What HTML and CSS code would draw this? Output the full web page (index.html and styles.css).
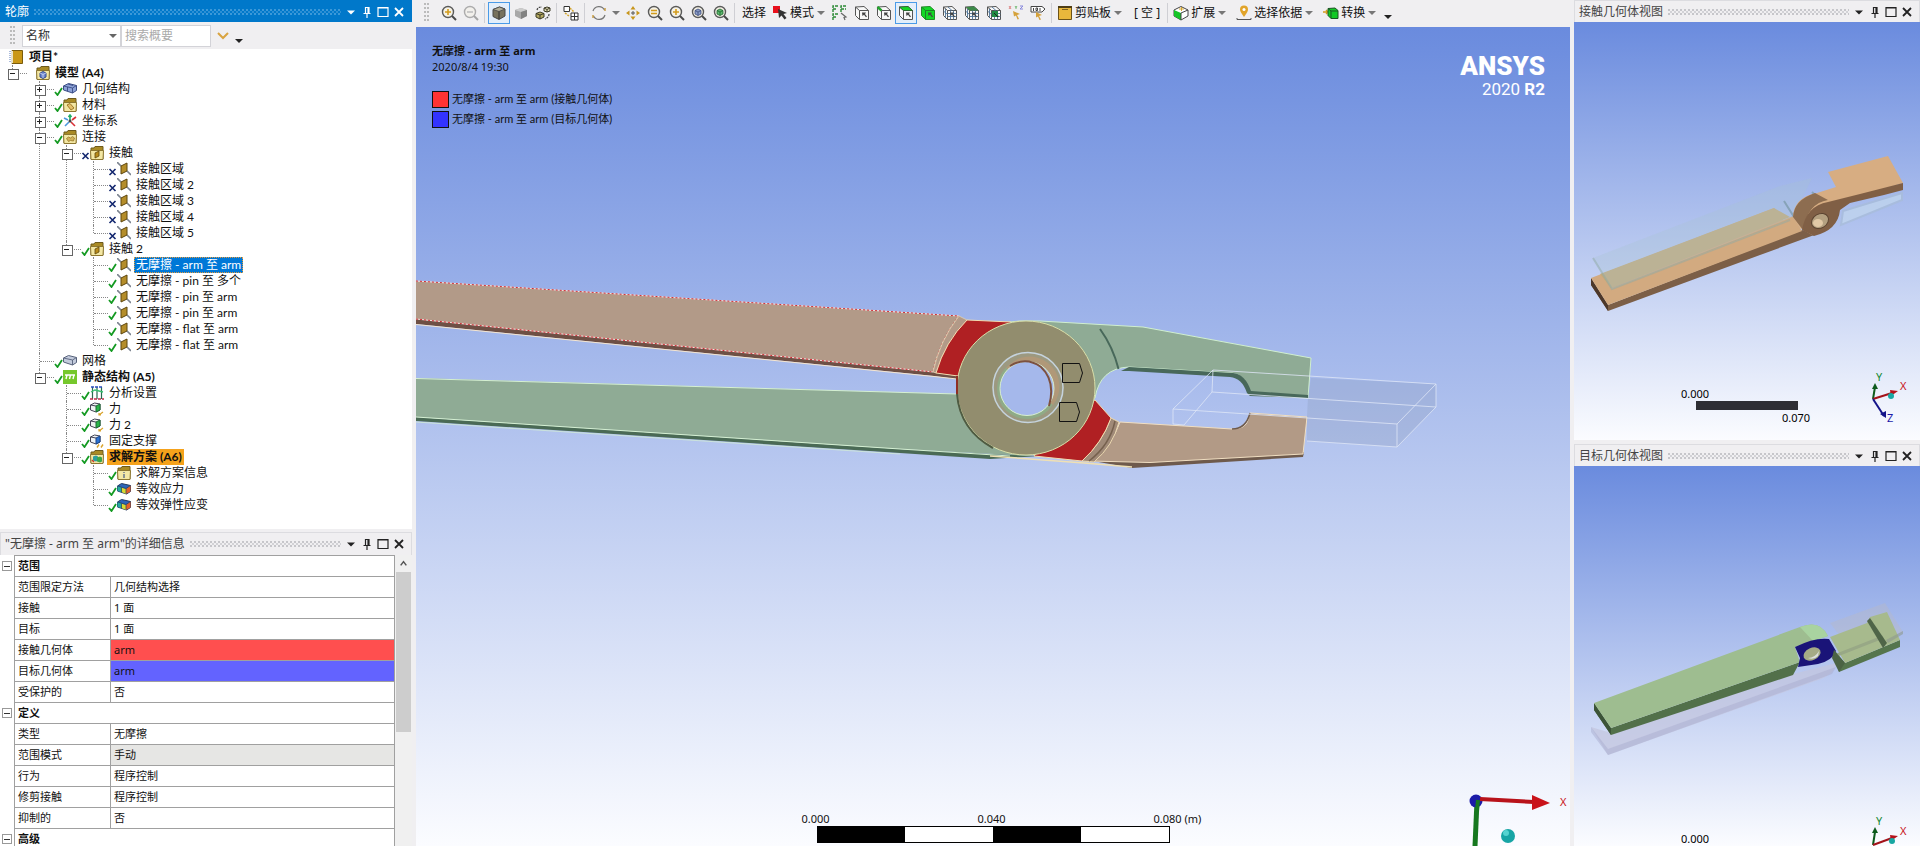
FILE: index.html
```html
<!DOCTYPE html>
<html lang="zh-CN">
<head>
    <meta charset="UTF-8">
    <meta name="viewport" content="width=device-width, initial-scale=1.0">
    <title>无摩擦 - arm 至 arm</title>
    <link rel="stylesheet" href="styles.css">
</head>
<body>

    <!-- icon sprite -->
    <svg class="sprite" aria-hidden="true">
        <symbol id="i-check" viewBox="0 0 9 9"><path d="M1 5l2.500 3L8 1" fill="none" stroke="#149a22" stroke-width="1.800"/></symbol>
        <symbol id="i-cross" viewBox="0 0 9 9"><path d="M1.500 2l6 6M7.500 2l-6 6" fill="none" stroke="#12266e" stroke-width="1.600"/></symbol>
        <symbol id="i-book" viewBox="0 0 14 14"><path d="M3 .5h10.500v13H3z" fill="#c99716" stroke="#7a5b0c"/><path d="M3 1v12" stroke="#e9e2c8" stroke-width="2"/><path d="M1 1v12" stroke="#5577b8" stroke-dasharray="1 1"/></symbol>
        <symbol id="i-folder" viewBox="0 0 14 14"><path d="M1 13V2h3l1-1.500h8V13z" fill="#a98a24" stroke="#6d5a1c"/><path d="M.5 4.500h13L13 13.500H1z" fill="#f3e7a4" stroke="#8c7630"/></symbol>
        <symbol id="i-model" viewBox="0 0 14 14"><use href="#i-folder"/><path d="M4 7l3-1.500L10 7v4l-3 1.500L4 11z" fill="#6c86cf" stroke="#354b8e"/><path d="M4 7l3 1.500L10 7M7 8.500V12" fill="none" stroke="#dfe6fa" stroke-width=".7"/></symbol>
        <symbol id="i-material" viewBox="0 0 14 14"><use href="#i-folder"/><path d="M4 7l3-1.500L11 10l-3 2z" fill="#e3c06b" stroke="#a17826"/></symbol>
        <symbol id="i-connect" viewBox="0 0 14 14"><use href="#i-folder"/><path d="M3.500 8.500l2-1.500 2 1 2-1.500 2 1.500-1 3-3-.5-2 1z" fill="#d2b25a" stroke="#987829" stroke-width=".8"/></symbol>
        <symbol id="i-cfolder" viewBox="0 0 14 14"><use href="#i-folder"/><path d="M5 7l4-2v5l-4 2z" fill="#b98c1c" stroke="#5d460d" stroke-width=".8"/></symbol>
        <symbol id="i-geom" viewBox="0 0 14 14"><path d="M0.500 4l5-2.500 8 2v5l-4 2.500-9-3z" fill="#8ea3d8" stroke="#3a4c84"/><path d="M.5 4l9 2 4-2.500M9.500 6v5M5 2l5 1.500M4.500 5v4" fill="none" stroke="#3a4c84" stroke-width=".9"/></symbol>
        <symbol id="i-mesh" viewBox="0 0 14 14"><path d="M0.500 4l5-2.500 8 2v5l-4 2.500-9-3z" fill="#c3cbdc" stroke="#56617a"/><path d="M.5 4l9 2 4-2.500M9.500 6v5" fill="none" stroke="#56617a" stroke-width=".9"/></symbol>
        <symbol id="i-coord" viewBox="0 0 14 14"><path d="M7 6V1M5.500 3L7 1l1.500 2" fill="none" stroke="#1fae68" stroke-width="1.600"/><path d="M8 8l4 4M9 6l4-3" stroke="#d93038" stroke-width="1.600"/><path d="M6 8l-4 4M5 6L1 4" stroke="#4b98dc" stroke-width="1.600"/><circle cx="7" cy="7" r="1.500" fill="#444"/></symbol>
        <symbol id="i-contact" viewBox="0 0 14 14"><path d="M0 0l4 4M10 9l4 4" stroke="#7c8490" stroke-width="1.600"/><path d="M4 4l6-3v8l-6 3z" fill="#b48d2a" stroke="#5d460d"/></symbol>
        <symbol id="i-static" viewBox="0 0 14 14"><path d="M0 0h14v14H0z" fill="#76c82c"/><path d="M2 5h10M4 5l-1 4M7.500 5l-1 4M11 5l-1 4" stroke="#fff" stroke-width="1.400"/></symbol>
        <symbol id="i-settings" viewBox="0 0 14 14"><path d="M2.500 1v12M7 1v12M11.500 1v12" stroke="#2a6b4f" stroke-width="1.200"/><path d="M1 6l4-2 4 1 4 1" fill="none" stroke="#3ac06f" stroke-width="1.300"/><path d="M1 1h12" stroke="#2a4cc0" stroke-width="1.500" stroke-dasharray="3 1"/><path d="M0 13h14" stroke="#c02a49" stroke-width="1.500" stroke-dasharray="3 1"/></symbol>
        <symbol id="i-force" viewBox="0 0 14 14"><path d="M.5 3l4-2 5.500 1v6l-4 2-5.500-2z" fill="#eef3f1" stroke="#445"/><path d="M6 4l4-2v6l-4 2z" fill="#29b548" stroke="#1b6a31"/><path d="M.5 3L6 4" stroke="#445"/><path d="M13 10l-4 3m0-2v2h2" fill="none" stroke="#d9a32c" stroke-width="1.200"/></symbol>
        <symbol id="i-fixed" viewBox="0 0 14 14"><path d="M.5 3l4-2 5.500 1v6l-4 2-5.500-2z" fill="#eef3f8" stroke="#445"/><path d="M6 4l4-2v6l-4 2z" fill="#2c72d2" stroke="#1c4484"/><path d="M.5 3L6 4" stroke="#445"/><path d="M9 10.500l-2 3M13 10.500l-2 3" stroke="#d9a32c" stroke-width="1.400"/></symbol>
        <symbol id="i-solution" viewBox="0 0 14 14"><use href="#i-folder"/><path d="M3 6.500l3-1 2 1v4l-2 1-3-1z" fill="#2e9d9f"/><path d="M7 7.500l3-1 2 1v4l-2 1-3-1z" fill="#3ba74b"/><path d="M2 10l2 2" stroke="#d03a2c" stroke-width="1.500"/></symbol>
        <symbol id="i-info" viewBox="0 0 14 14"><use href="#i-folder"/><path d="M7 6v1M7 8v4" stroke="#67758a" stroke-width="1.500"/></symbol>
        <symbol id="i-result" viewBox="0 0 14 14"><path d="M.5 4l4-2.500 9 2v6l-4 2.500-9-3z" fill="#2d64b8" stroke="#223a60"/><path d="M.5 4l4 1.500V10l-4-1z" fill="#23a8a0"/><path d="M4.500 5.500L9 7v5l-4.500-2z" fill="#d9d932"/><path d="M9 7l4.500-3.500v6L9 12z" fill="#e4602a"/><path d="M.5 4L9 6.500l4.500-3M4.500 5.500V10M9 7v5" fill="none" stroke="#27405c" stroke-width=".7"/></symbol>

        <symbol id="i-lens" viewBox="0 0 16 16"><circle cx="7" cy="7" r="5.500" fill="#f6f2e6" stroke="#5a5a5a" stroke-width="1.400"/><path d="M11 11l4 4" stroke="#4a4a4a" stroke-width="2"/></symbol>
        <symbol id="i-zoomback" viewBox="0 0 16 16"><use href="#i-lens"/><path d="M4 7h6M7 4v6" stroke="#d39c1d" stroke-width="1.600"/></symbol>
        <symbol id="i-zoomoff" viewBox="0 0 16 16"><g opacity=".45"><use href="#i-lens"/><path d="M4 7h6" stroke="#777" stroke-width="1.400"/></g></symbol>
        <symbol id="i-zoomrect" viewBox="0 0 16 16"><use href="#i-lens"/><path d="M4 5.500h6M4 8.500h6" stroke="#d39c1d" stroke-width="1.400"/></symbol>
        <symbol id="i-zoomfit" viewBox="0 0 16 16"><use href="#i-lens"/><path d="M4 5.500L7 4l3 1.500v3.500L7 10.500 4 9z" fill="#8b9cc6" stroke="#3c4d7d" stroke-width=".8"/><path d="M4 5.500L7 7l3-1.500M7 7v3.500" fill="none" stroke="#3c4d7d" stroke-width=".8"/></symbol>
        <symbol id="i-zoomsel" viewBox="0 0 16 16"><use href="#i-lens"/><path d="M4 5.500L7 4l3 1.500v3.500L7 10.500 4 9z" fill="#5cb86c" stroke="#1f6431" stroke-width=".8"/><path d="M4 5.500L7 7l3-1.500M7 7v3.500" fill="none" stroke="#1f6431" stroke-width=".8"/></symbol>
        <symbol id="i-shaded" viewBox="0 0 16 16"><path d="M2 4.500L8.500 2 14 4v7l-6 3.500-6-3z" fill="#77725d" stroke="#484848"/><path d="M2 4.500l6 2L14 4 8.500 2z" fill="#b3ad96" stroke="#484848" stroke-width=".8"/><path d="M8 6.500V14" stroke="#333"/></symbol>
        <symbol id="i-solid" viewBox="0 0 16 16"><path d="M2 5l6-2 6 2v6l-6 3-6-3z" fill="#a8a8a8"/><path d="M2 5l6 2 6-2-6-2z" fill="#ccc"/><path d="M8 7l6-2v6l-6 3z" fill="#828282"/></symbol>
        <symbol id="i-flip" viewBox="0 0 16 16"><path d="M1 8.500l4-1.500 4 1.500V12l-4 2-4-2z" fill="#b5aa62" stroke="#3c3a26"/><path d="M9 3l3-1 3 1v3l-3 1-3-1z" fill="#e4dfb8" stroke="#3c3a26"/><path d="M2 5c1-3 3-3 5-3M14 9c0 3-2 4-4 5" fill="none" stroke="#444" stroke-width="1.200" stroke-dasharray="2 1"/><path d="M1 8.500l4 1.500 4-1.500M5 10v4M9 3l3 1.500L15 3M12 4.500V7" fill="none" stroke="#3c3a26"/></symbol>
        <symbol id="i-tiles" viewBox="0 0 16 16"><path d="M1 1.500h5.500v5H1z" fill="#fff" stroke="#333"/><path d="M8 8h7v7H8zM11.500 8v7M8 11.500h7" fill="#fff" stroke="#333"/><path d="M7 3l4 4M2 8l4 3" fill="none" stroke="#d3a52e" stroke-width="1.500" stroke-dasharray="2 1"/></symbol>
        <symbol id="i-rotate" viewBox="0 0 16 16"><path d="M2 6a6.200 6.200 0 0 1 11.500-1M14 10a6.200 6.200 0 0 1-11.500 1" fill="none" stroke="#777" stroke-width="1.200"/><path d="M14 3v3M2 13v-3" fill="none" stroke="#c79a3a" stroke-width="1.400"/></symbol>
        <symbol id="i-pan" viewBox="0 0 16 16"><path d="M8 1l2.500 3.500h-5zM8 15l2.500-3.500h-5zM1 8l3.500-2.500v5zM15 8l-3.500-2.500v5z" fill="#c8961c"/><path d="M7 7h2v2H7z" fill="none" stroke="#555"/></symbol>
        <symbol id="i-mode" viewBox="0 0 16 16"><path d="M1 1h7v7H1z" fill="#e8101c"/><path d="M6 4l9 4-3.500 1 3 4-2 1.500-3-4L7 13z" fill="#333"/></symbol>
        <symbol id="i-filters" viewBox="0 0 16 16"><path d="M1 7V1h5M1 4h4M9 7V1h6M9 4h5M1 15V9h5M1 12h4" fill="none" stroke="#2c8a36" stroke-width="1.400" stroke-dasharray="3 1"/><path d="M9 8l5 4-2 .5 1 2.500" fill="none" stroke="#666" stroke-width="1.200"/></symbol>
        <symbol id="i-wire" viewBox="0 0 16 16"><path d="M1.500 2L10 1.500l4.500 4v9H5.500l-4-4z" fill="#f8f8f8" stroke="#555"/><path d="M1.500 2l4 3.500h9M5.500 5.500v9" fill="none" stroke="#555"/></symbol>
        <symbol id="i-arrowtip" viewBox="0 0 16 16"><path d="M8 7.500h4L11 9l2 2.500-1 .8-2-2.500-1.500 1.200z" fill="#444"/></symbol>
        <symbol id="i-vertex" viewBox="0 0 16 16"><use href="#i-wire"/><use href="#i-arrowtip"/></symbol>
        <symbol id="i-edge" viewBox="0 0 16 16"><use href="#i-wire"/><path d="M1.500 2l4 3.500" stroke="#22a52c" stroke-width="2.400"/><use href="#i-arrowtip"/></symbol>
        <symbol id="i-face" viewBox="0 0 16 16"><use href="#i-wire"/><path d="M1.500 2L10 1.500l4.500 4h-9z" fill="#15d423" stroke="#27582b" stroke-width=".7"/><use href="#i-arrowtip"/></symbol>
        <symbol id="i-body" viewBox="0 0 16 16"><path d="M1.500 2L10 1.500l4.500 4v9H5.500l-4-4z" fill="#12d825" stroke="#228b28"/><path d="M1.500 2l4 3.500h9M5.500 5.500v9" fill="none" stroke="#1b8026"/><use href="#i-arrowtip"/></symbol>
        <symbol id="i-node" viewBox="0 0 16 16"><use href="#i-wire"/><path d="M5.500 8.500h9M5.500 11.500h9M8.500 5.500v9M11.500 5.500v9M3.500 4v8.500M6 2l4 3.500M1.500 6l4 3.500" stroke="#4d7398" stroke-width=".9"/><use href="#i-arrowtip"/></symbol>
        <symbol id="i-elface" viewBox="0 0 16 16"><use href="#i-node"/><path d="M2 2L10 1.500l4.500 4h-9z" fill="#3c8a48"/></symbol>
        <symbol id="i-element" viewBox="0 0 16 16"><use href="#i-node"/><path d="M6 6h6v6H6z" fill="#1d8a42"/><path d="M8 8l4 4" stroke="#222"/></symbol>
        <symbol id="i-xyz" viewBox="0 0 16 16"><path d="M1 1l2 3M3 1L1 4" stroke="#d88"/><path d="M7 1l1 1.500L9 1M8 2v2" stroke="#7b7" fill="none"/><path d="M12 1h3l-3 3h3" stroke="#88d" fill="none"/><path d="M5 6l7 3-3 1 2 4-1.500.5-1.500-4-2 1z" fill="#d5a13a"/></symbol>
        <symbol id="i-tag" viewBox="0 0 16 16"><path d="M1 1.500h11l3 2.500-3 3H1z" fill="#fff" stroke="#444"/><path d="M3.500 3v3M10 3v3M6 3h1.500v2.500H6z" stroke="#444" fill="none"/><path d="M6 7l6 3-3 1 2 3.500-1.500.5L8 11.500l-2 1z" fill="#d5a13a"/></symbol>
        <symbol id="i-clip" viewBox="0 0 16 16"><path d="M1.500 1.500h13v13h-13z" fill="#e8b73c" stroke="#6d5318"/><path d="M1 2h14" stroke="#4e3d14" stroke-width="2"/><path d="M5 4.500h6" stroke="#7d611e"/></symbol>
        <symbol id="i-extend" viewBox="0 0 16 16"><path d="M1 5l7-3.500L15 5v6l-7 4-7-4z" fill="#fff" stroke="#444"/><path d="M1 5l7 3v7l-7-4z" fill="#15c527"/><path d="M8 8l7-3M8 8v7" fill="none" stroke="#444"/><path d="M6 4h5M8.500 2v4" stroke="#d3a52e"/></symbol>
        <symbol id="i-pin" viewBox="0 0 16 16"><path d="M8 12C5 8 4 6 4 4.500a4 4 0 0 1 8 0C12 6 11 8 8 12z" fill="#e1a42a"/><circle cx="8" cy="4.500" r="1.500" fill="#fff"/><path d="M1 13v1.500h14V13" fill="none" stroke="#555"/></symbol>
        <symbol id="i-convert" viewBox="0 0 16 16"><path d="M0 7h4M3 5l2 2-2 2" fill="none" stroke="#d39c1d" stroke-width="1.400"/><path d="M5 3.500L12 3l3 2.500v8H8l-3-3z" fill="#12c825" stroke="#1c5424"/><path d="M5 3.500L8 6h7M8 6v7.500" fill="none" stroke="#1c5424"/></symbol>

        <symbol id="w-menu" viewBox="0 0 12 12"><path d="M2 4.500h8L6 8.500z" fill="currentColor"/></symbol>
        <symbol id="w-pin" viewBox="0 0 12 12"><path d="M4 1.500h4.500M4.500 1v6M8 1v6M7 1v6M2.500 7.500h7M6 8v4" fill="none" stroke="currentColor" stroke-width="1.200"/></symbol>
        <symbol id="w-max" viewBox="0 0 12 12"><path d="M1 1.500h10v9H1zM1 2h10" fill="none" stroke="currentColor" stroke-width="1.200"/></symbol>
        <symbol id="w-close" viewBox="0 0 12 12"><path d="M2 2l8 8M10 2l-8 8" stroke="currentColor" stroke-width="1.800"/></symbol>
    </svg>

    <div class="app">
        <aside class="sidebar">
            <section class="panel outline">
                <header class="titlebar active">
                    <h2>轮廓</h2><span class="dots"></span>
                    <button aria-label="菜单"><svg><use href="#w-menu"/></svg></button>
                    <button aria-label="固定"><svg><use href="#w-pin"/></svg></button>
                    <button aria-label="最大化"><svg><use href="#w-max"/></svg></button>
                    <button aria-label="关闭"><svg><use href="#w-close"/></svg></button>
                </header>
                <div class="filter">
                    <span class="grip"></span>
                    <div class="pick">
                        <select aria-label="筛选方式"><option>名称</option></select>
                    </div>
                    <input type="text" placeholder="搜索概要" aria-label="搜索概要">
                    <button class="expand" aria-label="展开"><svg viewBox="0 0 12 8"><path d="M1 1l5 5 5-5" fill="none" stroke="#d9a441" stroke-width="2"/></svg></button>
                    <button class="more" aria-label="更多"></button>
                </div>
                <div class="tree">
                    <div class="project"><svg><use href="#i-book"/></svg><b>项目*</b></div>
                    <ul>
                        <li><div class="row"><i class="twig minus"></i><svg class="ico"><use href="#i-model"/></svg><b class="name">模型 (A4)</b></div>
                            <ul>
                                <li><div class="row"><i class="twig plus"></i><svg class="st"><use href="#i-check"/></svg><svg class="ico"><use href="#i-geom"/></svg><span class="name">几何结构</span></div></li>
                                <li><div class="row"><i class="twig plus"></i><svg class="st"><use href="#i-check"/></svg><svg class="ico"><use href="#i-material"/></svg><span class="name">材料</span></div></li>
                                <li><div class="row"><i class="twig plus"></i><svg class="st"><use href="#i-check"/></svg><svg class="ico"><use href="#i-coord"/></svg><span class="name">坐标系</span></div></li>
                                <li><div class="row"><i class="twig minus"></i><svg class="st"><use href="#i-check"/></svg><svg class="ico"><use href="#i-connect"/></svg><span class="name">连接</span></div>
                                    <ul>
                                        <li><div class="row"><i class="twig minus"></i><svg class="st"><use href="#i-cross"/></svg><svg class="ico"><use href="#i-cfolder"/></svg><span class="name">接触</span></div>
                                            <ul>
                                                <li><div class="row"><i class="twig"></i><svg class="st"><use href="#i-cross"/></svg><svg class="ico"><use href="#i-contact"/></svg><span class="name">接触区域</span></div></li>
                                                <li><div class="row"><i class="twig"></i><svg class="st"><use href="#i-cross"/></svg><svg class="ico"><use href="#i-contact"/></svg><span class="name">接触区域 2</span></div></li>
                                                <li><div class="row"><i class="twig"></i><svg class="st"><use href="#i-cross"/></svg><svg class="ico"><use href="#i-contact"/></svg><span class="name">接触区域 3</span></div></li>
                                                <li><div class="row"><i class="twig"></i><svg class="st"><use href="#i-cross"/></svg><svg class="ico"><use href="#i-contact"/></svg><span class="name">接触区域 4</span></div></li>
                                                <li><div class="row"><i class="twig"></i><svg class="st"><use href="#i-cross"/></svg><svg class="ico"><use href="#i-contact"/></svg><span class="name">接触区域 5</span></div></li>
                                            </ul>
                                        </li>
                                        <li><div class="row"><i class="twig minus"></i><svg class="st"><use href="#i-check"/></svg><svg class="ico"><use href="#i-cfolder"/></svg><span class="name">接触 2</span></div>
                                            <ul>
                                                <li><div class="row"><i class="twig"></i><svg class="st"><use href="#i-check"/></svg><svg class="ico"><use href="#i-contact"/></svg><span class="name selected">无摩擦 - arm 至 arm</span></div></li>
                                                <li><div class="row"><i class="twig"></i><svg class="st"><use href="#i-check"/></svg><svg class="ico"><use href="#i-contact"/></svg><span class="name">无摩擦 - pin 至 多个</span></div></li>
                                                <li><div class="row"><i class="twig"></i><svg class="st"><use href="#i-check"/></svg><svg class="ico"><use href="#i-contact"/></svg><span class="name">无摩擦 - pin 至 arm</span></div></li>
                                                <li><div class="row"><i class="twig"></i><svg class="st"><use href="#i-check"/></svg><svg class="ico"><use href="#i-contact"/></svg><span class="name">无摩擦 - pin 至 arm</span></div></li>
                                                <li><div class="row"><i class="twig"></i><svg class="st"><use href="#i-check"/></svg><svg class="ico"><use href="#i-contact"/></svg><span class="name">无摩擦 - flat 至 arm</span></div></li>
                                                <li><div class="row"><i class="twig"></i><svg class="st"><use href="#i-check"/></svg><svg class="ico"><use href="#i-contact"/></svg><span class="name">无摩擦 - flat 至 arm</span></div></li>
                                            </ul>
                                        </li>
                                    </ul>
                                </li>
                                <li><div class="row"><i class="twig"></i><svg class="st"><use href="#i-check"/></svg><svg class="ico"><use href="#i-mesh"/></svg><span class="name">网格</span></div></li>
                                <li><div class="row"><i class="twig minus"></i><svg class="st"><use href="#i-check"/></svg><svg class="ico"><use href="#i-static"/></svg><b class="name">静态结构 (A5)</b></div>
                                    <ul>
                                        <li><div class="row"><i class="twig"></i><svg class="st"><use href="#i-check"/></svg><svg class="ico"><use href="#i-settings"/></svg><span class="name">分析设置</span></div></li>
                                        <li><div class="row"><i class="twig"></i><svg class="st"><use href="#i-check"/></svg><svg class="ico"><use href="#i-force"/></svg><span class="name">力</span></div></li>
                                        <li><div class="row"><i class="twig"></i><svg class="st"><use href="#i-check"/></svg><svg class="ico"><use href="#i-force"/></svg><span class="name">力 2</span></div></li>
                                        <li><div class="row"><i class="twig"></i><svg class="st"><use href="#i-check"/></svg><svg class="ico"><use href="#i-fixed"/></svg><span class="name">固定支撑</span></div></li>
                                        <li><div class="row"><i class="twig minus"></i><svg class="st"><use href="#i-check"/></svg><svg class="ico"><use href="#i-solution"/></svg><b class="name current">求解方案 (A6)</b></div>
                                            <ul>
                                                <li><div class="row"><i class="twig"></i><svg class="st"><use href="#i-check"/></svg><svg class="ico"><use href="#i-info"/></svg><span class="name">求解方案信息</span></div></li>
                                                <li><div class="row"><i class="twig"></i><svg class="st"><use href="#i-check"/></svg><svg class="ico"><use href="#i-result"/></svg><span class="name">等效应力</span></div></li>
                                                <li><div class="row"><i class="twig"></i><svg class="st"><use href="#i-check"/></svg><svg class="ico"><use href="#i-result"/></svg><span class="name">等效弹性应变</span></div></li>
                                            </ul>
                                        </li>
                                    </ul>
                                </li>
                            </ul>
                        </li>
                    </ul>
                </div>
            </section>

            <section class="panel details">
                <header class="titlebar">
                    <h2>"无摩擦 - arm 至 arm"的详细信息</h2><span class="dots"></span>
                    <button aria-label="菜单"><svg><use href="#w-menu"/></svg></button>
                    <button aria-label="固定"><svg><use href="#w-pin"/></svg></button>
                    <button aria-label="最大化"><svg><use href="#w-max"/></svg></button>
                    <button aria-label="关闭"><svg><use href="#w-close"/></svg></button>
                </header>
                <div class="grid-wrap">
                    <table class="props">
                        <colgroup><col class="c-gutter"><col class="c-key"><col></colgroup>
                        <tr><td class="gutter"><i class="box"></i></td><th colspan="2">范围</th></tr>
                        <tr><td class="gutter"></td><td>范围限定方法</td><td>几何结构选择</td></tr>
                        <tr><td class="gutter"></td><td>接触</td><td>1 面</td></tr>
                        <tr><td class="gutter"></td><td>目标</td><td>1 面</td></tr>
                        <tr><td class="gutter"></td><td>接触几何体</td><td class="red">arm</td></tr>
                        <tr><td class="gutter"></td><td>目标几何体</td><td class="blue">arm</td></tr>
                        <tr><td class="gutter"></td><td>受保护的</td><td>否</td></tr>
                        <tr><td class="gutter"><i class="box"></i></td><th colspan="2">定义</th></tr>
                        <tr><td class="gutter"></td><td>类型</td><td>无摩擦</td></tr>
                        <tr><td class="gutter"></td><td>范围模式</td><td class="readonly">手动</td></tr>
                        <tr><td class="gutter"></td><td>行为</td><td>程序控制</td></tr>
                        <tr><td class="gutter"></td><td>修剪接触</td><td>程序控制</td></tr>
                        <tr><td class="gutter"></td><td>抑制的</td><td>否</td></tr>
                        <tr><td class="gutter"><i class="box"></i></td><th colspan="2">高级</th></tr>
                    </table>
                    <div class="scrollbar">
                        <svg viewBox="0 0 16 16"><path d="M5 10l3-4 3 4" fill="none" stroke="#555" stroke-width="1.600"/></svg>
                        <span class="thumb"></span>
                    </div>
                </div>
            </section>
        </aside>

        <main class="center">
            <nav class="toolbar">
                <span class="grip"></span>
                <button class="tb" aria-label="上一视图"><svg><use href="#i-zoomback"/></svg></button>
                <button class="tb" aria-label="下一视图"><svg><use href="#i-zoomoff"/></svg></button>
                <span class="sep"></span>
                <button class="tb on" aria-label="着色和边"><svg><use href="#i-shaded"/></svg></button>
                <button class="tb" aria-label="着色"><svg><use href="#i-solid"/></svg></button>
                <button class="tb" aria-label="翻转"><svg><use href="#i-flip"/></svg></button>
                <span class="sep"></span>
                <button class="tb" aria-label="视口"><svg><use href="#i-tiles"/></svg></button>
                <span class="sep"></span>
                <button class="tb" aria-label="旋转"><svg><use href="#i-rotate"/></svg></button>
                <i class="caret"></i>
                <button class="tb" aria-label="平移"><svg><use href="#i-pan"/></svg></button>
                <button class="tb" aria-label="缩放"><svg><use href="#i-zoomrect"/></svg></button>
                <button class="tb" aria-label="框缩放"><svg><use href="#i-zoomback"/></svg></button>
                <button class="tb" aria-label="缩放至全部"><svg><use href="#i-zoomfit"/></svg></button>
                <button class="tb" aria-label="缩放至选择"><svg><use href="#i-zoomsel"/></svg></button>
                <span class="sep"></span>
                <span class="label">选择</span>
                <button class="txt"><svg><use href="#i-mode"/></svg>模式<i class="caret"></i></button>
                <button class="tb" aria-label="过滤器"><svg><use href="#i-filters"/></svg></button>
                <button class="tb" aria-label="顶点"><svg><use href="#i-vertex"/></svg></button>
                <button class="tb" aria-label="边"><svg><use href="#i-edge"/></svg></button>
                <button class="tb on" aria-label="面"><svg><use href="#i-face"/></svg></button>
                <button class="tb" aria-label="体"><svg><use href="#i-body"/></svg></button>
                <button class="tb" aria-label="节点"><svg><use href="#i-node"/></svg></button>
                <button class="tb" aria-label="单元面"><svg><use href="#i-elface"/></svg></button>
                <button class="tb" aria-label="单元"><svg><use href="#i-element"/></svg></button>
                <button class="tb" aria-label="坐标"><svg><use href="#i-xyz"/></svg></button>
                <button class="tb" aria-label="标签"><svg><use href="#i-tag"/></svg></button>
                <span class="sep"></span>
                <button class="txt"><svg><use href="#i-clip"/></svg>剪贴板<i class="caret"></i></button>
                <span class="label">[ 空 ]</span>
                <span class="sep"></span>
                <button class="txt"><svg><use href="#i-extend"/></svg>扩展<i class="caret"></i></button>
                <button class="txt"><svg><use href="#i-pin"/></svg>选择依据<i class="caret"></i></button>
                <button class="txt"><svg><use href="#i-convert"/></svg>转换<i class="caret"></i></button>
                <button class="more" aria-label="更多"></button>
            </nav>

            <div class="view">
                <svg class="scene" viewBox="416 27 1154 819">
                    <!-- lower handle -->
                    <path d="M416 417L900 449 990 454 1040 456 990 459 900 453 416 421z" fill="#4a6a55"/>
                    <path d="M416 378L957 394 1030 420 1030 456 900 449 416 417z" fill="#8fab95"/>
                    <path d="M416 378.500L957 394M416 417L900 449 1010 456" fill="none" stroke="#d5f0d2"/>
                    <path d="M416 422L900 454" fill="none" stroke="#d5f0d2" stroke-width=".7"/>
                    <!-- upper handle -->
                    <path d="M416 319L933 372 957 376 956 379 934 376 416 324z" fill="#6e5045"/>
                    <path d="M416 281L959 316 Q940 340 933 372L416 319z" fill="#b29a88"/>
                    <path d="M416 324.500L934 376.500 957 379" fill="none" stroke="#f5e5cf"/>
                    <path d="M416 281L959 316Q940 340 933 372L416 319" fill="none" stroke="#f4e4dc"/>
                    <path d="M416 281L959 316Q940 340 933 372L416 319" fill="none" stroke="#d12c35" stroke-dasharray="2 2"/>
                    <path d="M959 316l8 4Q945 342 936 373l-3-1Q940 340 959 316z" fill="#b29a88" stroke="#ead7b0" stroke-width=".7"/>
                    <!-- upper jaw -->
                    <path d="M1000 323Q1020 320 1040 321L1143 327 1311 358 1308 398 1250 395Q1246 374 1232 373L1129 367Q1100 368 1095 398L1050 400z" fill="#8fab95" stroke="#d0efcf"/>
                    <path d="M1129 367L1233 373Q1245 374 1251 391L1308 395 1308 398 1250 396 1247 393Q1242 378 1230 377L1129 371 1121 371z" fill="#48685a"/>
                    <path d="M1100 329Q1113 347 1118.500 369" fill="none" stroke="#48685a" stroke-width="2"/>
                    <!-- lower jaw -->
                    <path d="M1082 459L1132 468 1303 457 1304 452 1132 462 1100 455z" fill="#6e5a4c"/>
                    <path d="M1120 422L1232 429Q1246 429 1248 420L1250 413 1307 417 1303 454 1150 462.500 1090 461Q1112 446 1120 422z" fill="#b29a86" stroke="#f1dfc2"/>
                    <path d="M1232 429Q1246 429 1250 413" fill="none" stroke="#6e5a4c" stroke-width="1.500"/>
                    <path d="M1111 418l8 4q-6 24-25 40l-12-1q20-18 29-43z" fill="#a08a78" stroke="#ead7b0"/>
                    <path d="M1115 421q-5 24-26 40" fill="none" stroke="#76614e" stroke-width="1.500"/>
                    <path d="M990 456L1084 463 1132 467" fill="none" stroke="#efe0b4" stroke-width="1.500"/>
                    <!-- contact faces -->
                    <path d="M967 320L1011 322 1000 350 958 376 936 373Q945 342 967 320z" fill="#b02023" stroke="#f3ddb0"/>
                    <path d="M1095 400L1111 418Q1102 443 1082 461L1034 456 1060 420z" fill="#b02023" stroke="#f3ddb0"/>
                    <!-- pivot -->
                    <ellipse cx="1026" cy="388" rx="69" ry="67" fill="#928d6e" stroke="#d9dfa9"/>
                    <path d="M957 376v18" stroke="#8f2f24" stroke-width="2"/>
                    <path d="M957 394Q960 430 993 448" fill="none" stroke="#4f5b42" stroke-width="2"/>
                    <circle cx="1028" cy="387.500" r="35" fill="#9c9980" stroke="#c5d3dd" stroke-width="1.500"/>
                    <circle cx="1027" cy="389" r="30" fill="#8fab87"/>
                    <path d="M1006 368A29 29 0 0 1 1053 405L1040 395z" fill="#b09878"/>
                    <circle cx="1027" cy="388.500" r="27" fill="#a5b8eb" stroke="#d8efd0"/>
                    <path d="M1010 366Q1026 356 1041 367 1056 381 1049 406" fill="none" stroke="#7c5140" stroke-width="2"/>
                    <path d="M1062.500 363.500h17l3 9.500-3 9.500h-17zM1059.500 402.500h17l3 9.500-3 9.500h-17z" fill="none" stroke="#111"/>
                    <!-- hidden plate -->
                    <path d="M1311 378L1436 384 1436 407 1397 447 1307 441V417L1308 398z" fill="#8492b5" opacity=".25"/>
                    <path d="M1213 370L1436 384V407L1397 447 1307 441M1213 370L1173 409V424M1213 370L1212 392 1436 407M1173 409L1397 424 1436 384M1397 424V447M1173 424 L1184 425L1212 392" fill="none" stroke="#dfe6f6" opacity=".8"/>
                    <!-- triad -->
                    <path d="M1477 801L1475 846" stroke="#16781f" stroke-width="5"/>
                    <circle cx="1476" cy="801" r="6.500" fill="#1b1ba8"/>
                    <path d="M1480 799L1534 802" stroke="#b8121a" stroke-width="4"/>
                    <path d="M1532 795L1550 803 1532 810z" fill="#c9121a"/>
                    <path d="M1478 800l-1 10" stroke="#16781f" stroke-width="4"/>
                    <circle cx="1508" cy="836" r="7" fill="#17a5a5"/><circle cx="1506" cy="833" r="3" fill="#55d3d0"/>
                    <text x="1560" y="806" class="axis red-axis">X</text>
                </svg>
                <div class="caption">
                    <div class="notes">
                        <h1>无摩擦 - arm 至 arm</h1>
                        <p>2020/8/4 19:30</p>
                        <ul class="legend">
                            <li><i class="swatch s-red"></i>无摩擦 - arm 至 arm (接触几何体)</li>
                            <li><i class="swatch s-blue"></i>无摩擦 - arm 至 arm (目标几何体)</li>
                        </ul>
                    </div>
                    <div class="brand"><strong>ANSYS</strong><span>2020 <b>R2</b></span></div>
                </div>
                <div class="ruler">
                    <div class="marks"><span>0.000</span><span>0.040</span><span>0.080 (m)</span></div>
                    <div class="bar"><i></i><i></i><i></i><i></i></div>
                </div>
            </div>
        </main>

        <aside class="previews">
            <section class="panel contact-view">
                <header class="titlebar">
                    <h2>接触几何体视图</h2><span class="dots"></span>
                    <button aria-label="菜单"><svg><use href="#w-menu"/></svg></button>
                    <button aria-label="固定"><svg><use href="#w-pin"/></svg></button>
                    <button aria-label="最大化"><svg><use href="#w-max"/></svg></button>
                    <button aria-label="关闭"><svg><use href="#w-close"/></svg></button>
                </header>
                <div class="view">
                    <svg class="scene" viewBox="1574 22 346 418">
                        <path d="M1591 278L1608 305 1802 230 1817 234 1608 311 1591 285z" fill="#7c5f47"/>
                        <path d="M1591 278L1608 305V311L1591 285z" fill="#4c382b"/>
                        <path d="M1591 278L1774 208 1783 220 1793 216 1802 231 1608 305z" fill="#d2aa80"/>
                        <path d="M1611 288L1790 217 1774 208 1600 274z" fill="#c3ab7c"/>
                        <path d="M1593 258L1780 186 1812 178 1793 217 1612 289z" fill="#a9c4d0" opacity=".3"/>
                        <path d="M1593 258l19 31L1790 220" fill="none" stroke="#8fa9a4" stroke-width="2" opacity=".5"/>
                        <path d="M1784 201l10 16M1812 192l8 8" stroke="#87a3b8" stroke-width="2"/>
                        <path d="M1843 211L1902 193 1902 200 1841 225z" fill="#c3d8ee" stroke="#a8bdd8" stroke-width="2" opacity=".7"/>
                        <path d="M1793 217Q1794 197 1817 193L1836 187 1828 172 1888 156 1903 183 1860 196 1840 208 1828 230 1812 235 1800 228z" fill="#d7ad82"/>
                        <path d="M1793 217Q1794 200 1815 193L1828 200Q1808 203 1803 230z" fill="#8d6d50"/>
                        <path d="M1802 230Q1806 206 1828 202L1860 194 1903 183V190L1884 195 1850 203 1840 210Q1838 230 1814 236z" fill="#805f45"/>
                        <ellipse cx="1820" cy="221" rx="9" ry="7" transform="rotate(-30 1820 221)" fill="#b4a080" stroke="#5c4431" stroke-width="1"/>
                        <ellipse cx="1818" cy="223" rx="5" ry="4" fill="#e2c9a6"/>
                        <path d="M1696 401h102v9h-102z" fill="#2e2e34"/>
                        <g class="ticks"><text x="1695" y="398">0.000</text><text x="1796" y="422">0.070</text></g>
                        <path d="M1873 399L1875 387" stroke="#0c5a1c" stroke-width="2"/><path d="M1872 389l3-6 3 6z" fill="#0c5a1c"/>
                        <path d="M1873 399L1892 393" stroke="#a3121a" stroke-width="2"/><path d="M1890 390l8 1-7 5z" fill="#b5121a"/>
                        <path d="M1873 399L1884 416" stroke="#14148a" stroke-width="2"/><path d="M1880 414l6-3v7z" fill="#14148a"/>
                        <circle cx="1891" cy="396" r="3" fill="#18a7a2"/>
                        <text x="1876" y="381" class="axis green-axis">Y</text><text x="1900" y="390" class="axis red-axis">X</text><text x="1887" y="422" class="axis blue-axis">Z</text>
                    </svg>
                </div>
            </section>
            <section class="panel target-view">
                <header class="titlebar">
                    <h2>目标几何体视图</h2><span class="dots"></span>
                    <button aria-label="菜单"><svg><use href="#w-menu"/></svg></button>
                    <button aria-label="固定"><svg><use href="#w-pin"/></svg></button>
                    <button aria-label="最大化"><svg><use href="#w-max"/></svg></button>
                    <button aria-label="关闭"><svg><use href="#w-close"/></svg></button>
                </header>
                <div class="view">
                    <svg class="scene" viewBox="1574 466 346 380">
                        <path d="M1591 727L1611 733 1793 674 1836 663Q1835 675 1815 681L1608 755z" fill="#c3c6df" opacity=".75"/>
                        <path d="M1591 727L1608 749 1836 667 1832 674 1608 755 1591 732z" fill="#a9add0" opacity=".5"/>
                        <path d="M1594 703L1611 728 1800 662 1793 675 1611 735 1594 710z" fill="#52704a"/>
                        <path d="M1594 703l17 25v7l-17-25z" fill="#3c5438"/>
                        <path d="M1594 703L1800 627Q1820 619 1828 636L1795 647 1800 662 1611 728z" fill="#9ebd90"/>
                        <path d="M1800 627Q1820 619 1828 636L1813 641z" fill="#a9d3a0"/>
                        <path d="M1795 647Q1815 637 1829 639L1836 651Q1832 661 1818 664L1798 667 1800 658z" fill="#1a1478"/>
                        <ellipse cx="1812" cy="654" rx="9" ry="6" transform="rotate(-25 1812 654)" fill="#a5ab86"/>
                        <path d="M1808 658q7 0 11-7l-1 5q-4 4-10 2z" fill="#dce0dc"/>
                        <path d="M1830 623L1885 603 1903 632 1885 640 1840 636z" fill="#b9b9c4" opacity=".4"/>
                        <path d="M1834 650L1845 663 1900 640V647L1839 672z" fill="#55754d"/>
                        <path d="M1830 637L1867 623 1870 617 1887 612 1900 640 1845 663z" fill="#a7ba8d"/>
                        <path d="M1837 655L1883 637" stroke="#98a886" stroke-width="3"/>
                        <path d="M1834 650l11 13-6 9-7-14z" fill="#4b6344"/>
                        <path d="M1867 621L1870 618 1887 643 1883 648z" fill="#4f6548"/>
                        <path d="M1886 640L1903 631V634L1888 643z" fill="#8e9a90" opacity=".6"/>
                        <g class="ticks"><text x="1695" y="843">0.000</text></g>
                        <path d="M1873 845L1875 832" stroke="#0c5a1c" stroke-width="2"/><path d="M1872 833l3-6 3 6z" fill="#0c5a1c"/>
                        <path d="M1873 845L1892 838" stroke="#a3121a" stroke-width="2"/><path d="M1890 835l8 1-7 5z" fill="#b5121a"/>
                        <circle cx="1892" cy="841" r="3" fill="#18a7a2"/>
                        <text x="1876" y="825" class="axis green-axis">Y</text><text x="1900" y="835" class="axis red-axis">X</text>
                    </svg>
                </div>
            </section>
        </aside>
    </div>

</body>
</html>
```
FILE: styles.css
```css
* { margin: 0; padding: 0; box-sizing: border-box; }
body { background: #f0eff1; color: #111; font-family: "Noto Sans", "Noto Sans CJK SC", sans-serif; font-size: 12px; line-height: 16px; overflow: hidden; }
button { background: none; border: none; font: inherit; color: inherit; }
ul { list-style: none; }
.sprite { display: none; }

.app { display: flex; height: 100vh; }
.sidebar { width: 412px; margin-right: 4px; display: flex; flex-direction: column; gap: 3px; flex-shrink: 0; }
.center { flex: 1; min-width: 0; display: flex; flex-direction: column; }
.previews { width: 346px; margin-left: 4px; display: flex; flex-direction: column; gap: 4px; flex-shrink: 0; }
.panel { display: flex; flex-direction: column; min-height: 0; }

/* title bars */
.titlebar { display: flex; align-items: center; height: 22px; flex-shrink: 0; padding: 0 4px; border: 1px solid #dcdce0; border-bottom: none; color: #222; }
.titlebar h2 { font-size: 12px; font-weight: normal; color: #444; white-space: nowrap; }
.titlebar.active { background: #0078ca; border-color: #0078ca; color: #fff; }
.titlebar.active h2 { color: #fff; }
.titlebar button { width: 16px; height: 16px; display: flex; align-items: center; justify-content: center; }
.titlebar svg { width: 12px; height: 12px; }
.dots { flex: 1; height: 6px; margin: 0 2px 0 5px; background: linear-gradient(#c4c4c8, #c4c4c8) 0 0 / 1px 1px; background: conic-gradient(#bbbbc0 25%, transparent 0) 0 0 / 4px 4px; background: radial-gradient(circle at 1px 1px, #c6c6ca 1px, transparent 1px) 0 0 / 4px 4px, radial-gradient(circle at 1px 1px, #d2d2d6 1px, transparent 1px) 2px 2px / 4px 4px; }
.active .dots { background: radial-gradient(circle at 1px 1px, #3c99d9 1px, transparent 1px) 0 0 / 4px 4px, radial-gradient(circle at 1px 1px, #2c8fd4 1px, transparent 1px) 2px 2px / 4px 4px; }

/* outline */
.filter { display: flex; align-items: center; height: 27px; padding: 2px 0 2px 10px; flex-shrink: 0; }
.grip { width: 6px; height: 20px; background: radial-gradient(circle at 1px 1px, #bbb 1px, transparent 1px) 0 0 / 3px 4px; }
.filter .grip { margin-right: 6px; }
.pick { position: relative; }
.pick::after { content: ""; position: absolute; right: 4px; top: 9px; border: 4px solid transparent; border-top-color: #666; border-bottom: none; }
.pick select { width: 99px; appearance: none; }
.filter select, .filter input { height: 22px; border: 1px solid #d3d3d8; background: #fff; font: inherit; padding: 0 3px; color: #333; display: block; }
.filter input { width: 90px; }
.filter input::placeholder { color: #aaa; }
.expand { width: 12px; height: 8px; margin-left: 6px; display: flex; }
.more { width: 8px; height: 4px; margin: 10px 0 0 6px; border: 4px solid transparent; border-top-color: #222; border-bottom: none; }
.tree { background: #fff; height: 480px; font-family: Lato, "Noto Sans CJK SC", sans-serif; }
.project { display: flex; align-items: center; gap: 6px; height: 16px; padding-left: 9px; }
.project svg { width: 14px; height: 14px; }
.tree ul ul { margin-left: 27px; }
.tree li { position: relative; }
.tree li::before { content: ""; position: absolute; left: 12px; top: 0; bottom: 0; border-left: 1px dotted #888; }
.tree li:last-child::before { height: 8px; bottom: auto; }
.row { display: flex; align-items: center; height: 16px; }
.twig { position: relative; width: 27px; height: 9px; flex-shrink: 0; }
.twig::before { content: ""; position: absolute; left: 13px; right: 0; top: 4px; border-top: 1px dotted #888; }
.minus::after, .plus::after { content: ""; position: absolute; left: 8px; top: 0; width: 9px; height: 9px; border: 1px solid #666; background: linear-gradient(#222, #222) 1px 3px / 5px 1px no-repeat, #fff; }
.plus::after { background: linear-gradient(#222, #222) 1px 3px / 5px 1px no-repeat, linear-gradient(#222, #222) 3px 1px / 1px 5px no-repeat, #fff; }
.st { width: 9px; height: 9px; margin-top: 5px; flex-shrink: 0; }
.ico { width: 14px; height: 14px; flex-shrink: 0; }
.row > .twig + .ico { margin-left: 9px; }
.name { margin-left: 3px; padding: 0 2px; white-space: nowrap; color: #111; }
.selected { background: #0078d7; color: #fff; outline: 1px dotted #e59b3c; outline-offset: -1px; }
.current { background: #f5a21b; }

/* details */
.details { flex: 1; }
.details .titlebar { height: 23px; }
.grid-wrap { display: flex; flex: 1; min-height: 0; overflow: hidden; background: #f0f0f0; }
.props { flex: 1; border-collapse: collapse; table-layout: fixed; background: #fff; font-size: 11px; line-height: 14px; align-self: flex-start; }
.c-gutter { width: 14px; }
.c-key { width: 96px; }
.props td, .props th { height: 21px; border: 1px solid #a0a0a0; padding: 0 3px; text-align: left; }
.props td.gutter { border: none; padding: 0 2px; }
.props td.red { background: #ff4f4f; }
.props td.blue { background: #6363ff; }
.props td.readonly { background: #e6e6e4; }
.box { display: block; width: 10px; height: 10px; border: 1px solid #999; background: linear-gradient(#333, #333) 1px 4px / 6px 1px no-repeat; }
.scrollbar { width: 17px; padding: 0 1px; display: flex; flex-direction: column; }
.scrollbar svg { height: 17px; }
.thumb { height: 160px; background: #cdcdcd; }

/* toolbar */
.toolbar { display: flex; align-items: center; height: 27px; padding: 0 0 2px 8px; flex-shrink: 0; white-space: nowrap; }
.toolbar .grip { margin-right: 8px; }
.toolbar svg { width: 16px; height: 16px; flex-shrink: 0; }
.tb { width: 22px; height: 22px; display: flex; align-items: center; justify-content: center; }
.tb.on { border: 1px solid #4a9be8; background: #e3eefa; }
.sep { width: 1px; height: 20px; margin: 0 3px 0 2px; background: #cfcfd4; }
.caret { border: 4px solid transparent; border-top-color: #777; border-bottom: none; margin: 0 2px; }
.label { padding: 0 4px; }
.txt { display: flex; align-items: center; gap: 2px; padding: 0 2px; }
.txt .caret { margin: 0 2px 0 1px; }
.txt + .label { padding: 0 5px 0 8px; }
.txt + .txt { margin-left: 4px; }
.toolbar .more { margin: 8px 0 0 4px; }

/* viewports */
.view { position: relative; flex: 1; min-height: 0; display: flex; flex-direction: column; justify-content: space-between; background: linear-gradient(#6a8bde, #fbfcff); }
.scene { position: absolute; left: 0; top: 0; width: 100%; height: 100%; }
.caption { position: relative; display: flex; justify-content: space-between; padding: 16px 25px 0 16px; }
.notes { font-size: 11px; }
.notes h1 { font-size: 11px; line-height: 16px; }
.legend { margin-top: 14px; font-family: Lato, "Noto Sans CJK SC", sans-serif; }
.legend li { display: flex; align-items: center; gap: 3px; height: 20px; }
.swatch { width: 17px; height: 17px; border: 1px solid #111; }
.s-red { background: #ff3333; }
.s-blue { background: #3333ff; }
.brand { display: flex; flex-direction: column; align-items: flex-end; padding-top: 9px; color: #fff; font-family: "Liberation Sans Narrow", Roboto, sans-serif; }
.brand strong { font-size: 26px; line-height: 28px; font-weight: 900; }
.brand span { font-size: 17px; line-height: 18px; }
.ruler { position: relative; width: 353px; margin: 0 auto; padding-bottom: 3px; font-size: 11px; line-height: 14px; }
.marks { display: grid; grid-template-columns: 176px 176px auto; margin: 0 -40px 0 -15px; }
.bar { display: flex; height: 17px; border: 1px solid #000; background: #fff; }
.bar i { flex: 1; }
.bar i:nth-child(odd) { background: #000; }
.axis { font-size: 11px; }
.red-axis { fill: #c9121a; }
.green-axis { fill: #158a35; }
.blue-axis { fill: #1b1ba8; }
.ticks { font-size: 11px; text-anchor: middle; }

.contact-view { height: 440px; }
.target-view { flex: 1; }
```
